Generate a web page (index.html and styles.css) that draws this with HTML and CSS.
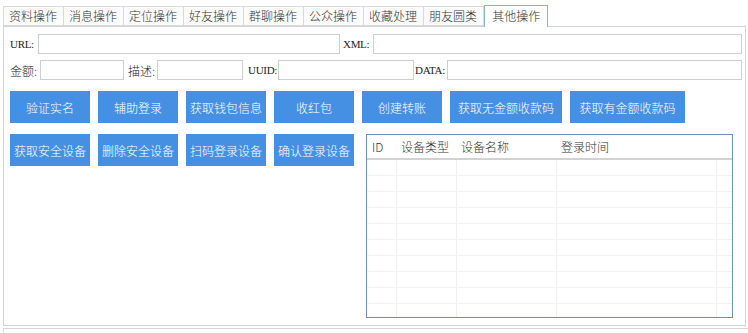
FILE: index.html
```html
<!DOCTYPE html>
<html lang="zh-CN">
<head>
  <meta charset="UTF-8">
  <title>其他操作</title>
  <link rel="stylesheet" href="styles.css">
</head>
<body>

  <div class="tabs">
    <div class="tab">资料操作</div>
    <div class="tab">消息操作</div>
    <div class="tab">定位操作</div>
    <div class="tab">好友操作</div>
    <div class="tab">群聊操作</div>
    <div class="tab">公众操作</div>
    <div class="tab">收藏处理</div>
    <div class="tab">朋友圆类</div>
    <div class="tab active">其他操作</div>
  </div>

  <div class="panel">
    <div class="row">
      <label class="latin lbl-url">URL:</label>
      <input type="text" class="in-url" />
      <label class="latin lbl-xml">XML:</label>
      <input type="text" class="in-fill" />
    </div>

    <div class="row row2">
      <label class="lbl-amount">金额:</label>
      <input type="text" class="in-amount" />
      <label class="lbl-desc">描述:</label>
      <input type="text" class="in-desc" />
      <label class="latin lbl-uuid">UUID:</label>
      <input type="text" class="in-uuid" />
      <label class="latin lbl-data">DATA:</label>
      <input type="text" class="in-fill" />
    </div>

    <div class="btn-row">
      <button>验证实名</button>
      <button>辅助登录</button>
      <button>获取钱包信息</button>
      <button>收红包</button>
      <button>创建转账</button>
      <button class="wide">获取无金额收款码</button>
      <button class="wider">获取有金额收款码</button>
    </div>

    <div class="lower">
      <div class="btn-group">
        <button>获取安全设备</button>
        <button>删除安全设备</button>
        <button>扫码登录设备</button>
        <button>确认登录设备</button>
      </div>

      <div class="list">
        <table>
          <colgroup>
            <col class="c-id">
            <col class="c-type">
            <col class="c-name">
            <col class="c-time">
            <col>
          </colgroup>
          <thead>
            <tr><th>ID</th><th>设备类型</th><th>设备名称</th><th>登录时间</th><th></th></tr>
          </thead>
          <tbody id="rows"></tbody>
        </table>
      </div>
    </div>
  </div>

  <div class="status"></div>

  <script>
    // empty grid lines of the device list
    const rows = document.getElementById("rows");
    for (let i = 0; i < 10; i++) {
      rows.innerHTML += "<tr><td></td><td></td><td></td><td></td><td></td></tr>";
    }
  </script>

</body>
</html>
```

FILE: styles.css
```css
* {
  box-sizing: border-box;
}

body {
  margin: 0;
  background: #fff;
  font-family: "Noto Sans CJK SC", "Noto Sans", sans-serif;
  font-size: 12px;
  font-weight: 300;
  color: #333;
  height: 333px;
  overflow: hidden;
}

.tabs {
  display: flex;
  align-items: flex-end;
  margin: 5px 0 0 3px;
}

.tab {
  height: 20px;
  padding: 0 6px 0 5px;
  border: 1px solid #d9d9d9;
  border-left: none;
  background: #fcfcfc;
  line-height: 17px;
  white-space: nowrap;
}

.tab:first-child {
  border-left: 1px solid #d9d9d9;
}

.tab.active {
  position: relative;
  z-index: 1;
  height: 22px;
  margin-bottom: -1px;
  padding: 0 7px;
  border: 1px solid #8fb0d8;
  border-bottom: none;
  background: #fff;
  line-height: 19px;
}

.panel {
  margin-left: 3px;
  width: 743px;
  height: 300px;
  border: 1px solid #d4d4d4;
  padding: 7px 3px 0 6px;
}

.row {
  display: flex;
  align-items: center;
  height: 20px;
}

.row2 {
  margin-top: 6px;
}

label {
  flex: none;
  white-space: nowrap;
  color: #222;
}

.latin {
  font-family: "Liberation Serif", serif;
  font-size: 11px;
  font-weight: normal;
  letter-spacing: -0.3px;
}

input {
  flex: none;
  height: 20px;
  border: 1px solid #cfcfcf;
  background: #fff;
  margin: 0;
  padding: 0 3px;
}

.in-fill {
  flex: 1;
}

.lbl-url { width: 28px; }
.in-url { width: 302px; }
.lbl-xml { width: 30px; margin-left: 3px; }

.lbl-amount { width: 30px; }
.in-amount { width: 84px; }
.lbl-desc { width: 29px; margin-left: 4px; }
.in-desc { width: 86px; }
.lbl-uuid { width: 30px; margin-left: 5px; }
.in-uuid { width: 136px; }
.lbl-data { width: 32px; margin-left: 1px; }

button {
  flex: none;
  width: 80px;
  height: 32px;
  border: none;
  background: #4690e4;
  color: #fff;
  font-family: inherit;
  font-size: 12px;
  font-weight: 300;
  padding: 0;
}

button.wide { width: 112px; }
button.wider { width: 115px; }

.btn-row {
  display: flex;
  gap: 8px;
  margin-top: 11px;
}

.lower {
  display: flex;
  align-items: flex-start;
  margin-top: 11px;
}

.btn-group {
  display: flex;
  gap: 8px;
}

.list {
  margin-left: 12px;
  width: 367px;
  height: 184px;
  border: 1px solid #6f8fb8;
  overflow: hidden;
}

table {
  width: 100%;
  border-collapse: collapse;
  table-layout: fixed;
}

.c-id { width: 29px; }
.c-type { width: 60px; }
.c-name { width: 100px; }
.c-time { width: 160px; }

th {
  height: 24px;
  padding: 0 0 0 5px;
  text-align: left;
  font-weight: 300;
  color: #333;
  border-bottom: 2px solid #d2d2d2;
}

td {
  height: 16px;
  border-right: 1px solid #f0f0f0;
  border-bottom: 1px solid #f3f3f3;
}

td:last-child {
  border-right: none;
}

.status {
  margin: 2px 0 0 3px;
  height: 10px;
  border-top: 1px solid #d4d4d4;
  border-left: 1px solid #d4d4d4;
}
```
